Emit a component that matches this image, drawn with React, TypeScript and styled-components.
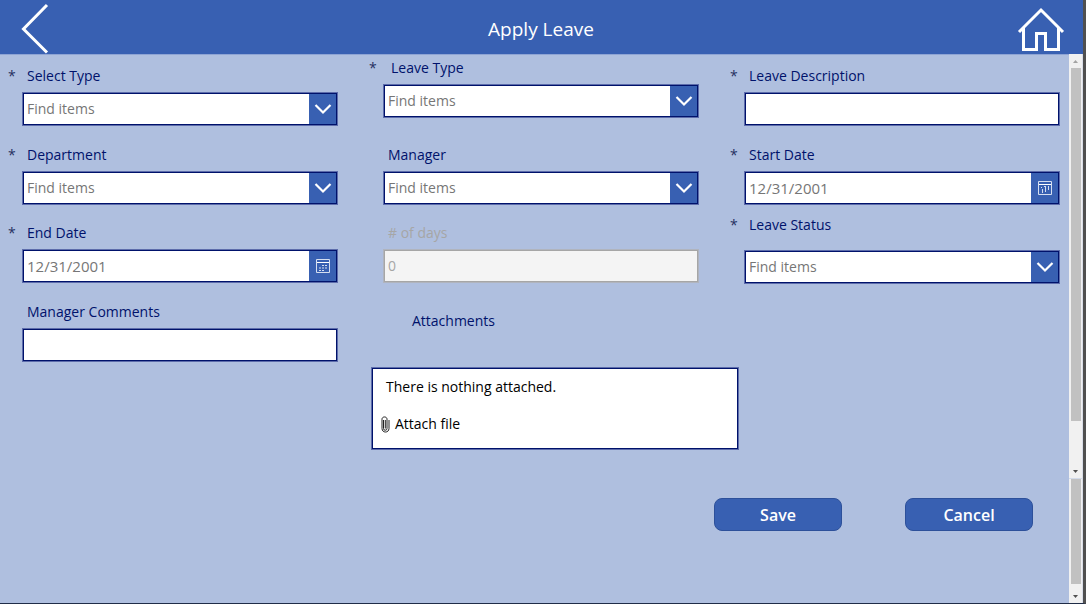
import React from "react";
import styled, { createGlobalStyle, css } from "styled-components";

const navy = "#00126b";
const blue = "#3860b2";
const sky = "#afbfdf";

const GlobalStyle = createGlobalStyle`
  *, *::before, *::after { box-sizing: border-box; }
  body {
    margin: 0;
    font-family: "Open Sans", "Noto Sans", sans-serif;
    font-size: 14px;
    line-height: 22px;
    color: ${navy};
  }
  button, input, select { font: inherit; }
`;

const Page = styled.div`
  min-height: 100vh;
  display: flex;
  flex-direction: column;
  background: ${sky};
  border-right: 3px solid #505050;
  border-bottom: 1px solid #1f2c47;
`;

const Header = styled.header`
  display: flex;
  align-items: center;
  justify-content: space-between;
  height: 54px;
  padding: 0 17px 0 10px;
  background: ${blue};
  box-shadow: 0 1px 0 #8ea4d4;
`;

const HeaderButton = styled.button`
  display: flex;
  align-items: center;
  justify-content: center;
  width: 50px;
  height: 54px;
  padding: 0;
  border: 0;
  background: transparent;
  color: #fff;
  cursor: pointer;
`;

const Title = styled.h1`
  flex: 1;
  margin: 0;
  padding: 4px 0 0 6px;
  text-align: center;
  font-size: 19px;
  line-height: 28px;
  font-weight: 400;
  color: #fff;
`;

const Body = styled.div`
  flex: 1;
  display: flex;
`;

const Form = styled.form`
  flex: 1;
  min-width: 0;
`;

const FieldGrid = styled.div`
  display: grid;
  grid-template-columns: repeat(3, minmax(0, 1fr));
  grid-template-rows: 79px 78px;
  grid-auto-rows: minmax(79px, auto);
  column-gap: 24px;
  padding-right: 10px;
`;

const FieldCell = styled.div<{ $raised?: boolean; $loose?: boolean }>`
  display: flex;
  flex-direction: column;
  gap: ${(p) => (p.$loose ? 14 : 5)}px;
  padding: ${(p) => (p.$raised || p.$loose ? 3 : 11)}px 0 0 22px;
`;

const LabelRow = styled.div`
  display: flex;
  margin-left: -22px;
`;

const Mark = styled.span<{ $wide?: boolean }>`
  width: ${(p) => (p.$wide ? 30 : 27)}px;
  padding-left: 8px;
  color: #26315f;
`;

const Label = styled.label<{ $muted?: boolean }>`
  color: ${(p) => (p.$muted ? "#a6a6a6" : navy)};
`;

const Control = styled.div<{ $muted?: boolean }>`
  position: relative;
  display: flex;
  height: 32px;
  margin: 1px 0 1px 1px;
  border: 1px solid ${(p) => (p.$muted ? "#a6a6a6" : navy)};
  box-shadow: 0 0 0 1px ${(p) => (p.$muted ? "#b0b4be" : "#5d6cab")};
  background: ${(p) => (p.$muted ? "#f4f4f4" : "#fff")};
`;

const inputBase = css`
  flex: 1;
  min-width: 0;
  width: 100%;
  padding: 0 3px;
  border: 0;
  border-radius: 0;
  background: transparent;
  color: #767676;
`;

const TextInput = styled.input`
  ${inputBase}
  font-size: 15px;
  &:disabled { color: #a6a6a6; font-size: 14px; }
`;

const Select = styled.select`
  ${inputBase}
  appearance: none;
  padding: 0 32px 1px 3px;
`;

const Chevron = styled.span`
  position: absolute;
  top: 0;
  right: 0;
  bottom: 0;
  width: 27px;
  display: flex;
  align-items: center;
  justify-content: center;
  background: ${blue};
  color: #fff;
  pointer-events: none;
`;

const DateButton = styled.button`
  display: flex;
  align-items: center;
  justify-content: center;
  width: 27px;
  padding: 0;
  border: 0;
  background: ${blue};
  cursor: pointer;
`;

const AttachmentCell = styled.section`
  grid-column: 2 / span 2;
  padding: 20px 0 0 11px;
`;

const AttachmentTitle = styled.h2`
  margin: 0 0 36px;
  padding-left: 40px;
  font-size: 14px;
  line-height: 22px;
  font-weight: 400;
`;

const AttachmentBox = styled.div`
  width: 53.3%;
  min-height: 81px;
  margin-bottom: 1px;
  padding: 7px 8px;
  border: 1px solid ${navy};
  box-shadow: 0 0 0 1px #5d6cab;
  background: #fff;
  color: #000;
`;

const AttachmentEmpty = styled.p`
  margin: 0 0 15px;
  padding-left: 5px;
`;

const AttachButton = styled.button`
  display: flex;
  align-items: center;
  gap: 5px;
  padding: 0;
  border: 0;
  background: transparent;
  color: #000;
  cursor: pointer;
`;

const Actions = styled.div`
  display: flex;
  justify-content: flex-end;
  gap: 63px;
  padding: 48px 36px 24px;
`;

const ActionButton = styled.button`
  width: 128px;
  height: 33px;
  padding: 0;
  border: 1px solid #2d509a;
  border-radius: 8px;
  background: ${blue};
  color: #fff;
  font-size: 16px;
  font-weight: 600;
  cursor: pointer;
`;

const Rails = styled.div`
  display: flex;
  flex-direction: column;
  width: 14px;
  background: #f1f1f1;
  border-right: 1px solid #d9dde8;
`;

const Rail = styled.div<{ $share: number; $divided?: boolean }>`
  flex: ${(p) => p.$share} 1 0;
  display: flex;
  flex-direction: column;
  align-items: center;
  border-top: ${(p) => (p.$divided ? "1px solid #d3dbea" : "0")};
`;

const Thumb = styled.div<{ $share: number }>`
  flex: ${(p) => p.$share} 1 0;
  width: 10px;
  background: #c1c1c1;
`;

const Track = styled.div<{ $share: number }>`
  flex: ${(p) => p.$share} 1 0;
`;

const Arrow = styled.svg`
  display: block;
  flex: none;
`;

const BackIcon = () => (
  <svg width="32" height="54" viewBox="0 0 32 54" fill="none" aria-hidden="true">
    <path d="M28 5 4.500 29 28 52.500" stroke="currentColor" strokeWidth="3" />
  </svg>
);

const HomeIcon = () => (
  <svg width="50" height="54" viewBox="0 0 50 54" fill="none" stroke="currentColor" strokeWidth="3" aria-hidden="true">
    <path d="M3 32 25 10 47 32" />
    <path d="M7.500 28v21.500h13v-16h9v16h13V28" />
  </svg>
);

const ChevronIcon = () => (
  <svg width="18" height="12" viewBox="0 0 18 12" fill="none" aria-hidden="true">
    <path d="m1.500 2 7.500 7.500L16.500 2" stroke="currentColor" strokeWidth="2.200" />
  </svg>
);

const CalendarIcon = ({ bars }: { bars?: boolean }) => (
  <svg width="14" height="14" viewBox="0 0 14 14" fill="none" stroke="#d5def0" aria-hidden="true">
    <path d="M.5.5h13v13H.5z" />
    <path d="M1 3.500h12" stroke="#fff" />
    {bars ? (
      <path d="M4.500 8v4M7.500 5v6M10.500 5v4M3 6.500h1M6 5.500h1" />
    ) : (
      <path d="M6 6.500h2M9 6.500h2M3 9h2M6 9h2M9 9h2M3 11.500h2M6 11.500h2" />
    )}
  </svg>
);

const ClipIcon = () => (
  <svg width="9" height="17" viewBox="0 0 9 17" fill="none" stroke="#222" aria-hidden="true">
    <path d="M2.500 4v8.500a1.700 1.700 0 0 0 3.500 0V3.200C6 .2 1 .2 1 3.200v9.300c0 4.700 7 4.700 7 0V4" />
    <path d="M4.300 4v8.500" />
  </svg>
);

const ScrollArrow = ({ up }: { up?: boolean }) => (
  <Arrow width="13" height="14" viewBox="0 0 13 14" aria-hidden="true">
    {up ? (
      <path d="M4 9h5L6.500 6z" fill="#a3a3a3" />
    ) : (
      <path d="M4 6h5L6.500 9z" fill="#505050" />
    )}
  </Arrow>
);

type FieldProps = {
  id: string;
  label: string;
  kind: "select" | "date" | "text";
  required?: boolean;
  raised?: boolean;
  loose?: boolean;
  disabled?: boolean;
  bars?: boolean;
  value?: string;
};

const Field = ({ id, label, kind, required, raised, loose, disabled, bars, value }: FieldProps) => (
  <FieldCell $raised={raised} $loose={loose}>
    <LabelRow>
      <Mark $wide={raised} aria-hidden="true">{required ? "*" : ""}</Mark>
      <Label htmlFor={id} $muted={disabled}>{label}</Label>
    </LabelRow>
    <Control $muted={disabled}>
      {kind === "select" ? (
        <>
          <Select id={id} required={required} defaultValue="">
            <option value="">Find items</option>
          </Select>
          <Chevron><ChevronIcon /></Chevron>
        </>
      ) : (
        <TextInput id={id} type="text" required={required} disabled={disabled} defaultValue={value} />
      )}
      {kind === "date" && (
        <DateButton type="button" aria-label={`Choose ${label}`}>
          <CalendarIcon bars={bars} />
        </DateButton>
      )}
    </Control>
  </FieldCell>
);

export default function App() {
  return (
    <>
      <GlobalStyle />
      <Page>
        <Header>
          <HeaderButton type="button" aria-label="Back"><BackIcon /></HeaderButton>
          <Title>Apply Leave</Title>
          <HeaderButton type="button" aria-label="Home"><HomeIcon /></HeaderButton>
        </Header>
        <Body>
          <Form onSubmit={(e) => e.preventDefault()}>
            <FieldGrid>
              <Field id="select-type" label="Select Type" kind="select" required />
              <Field id="leave-type" label="Leave Type" kind="select" required raised />
              <Field id="leave-description" label="Leave Description" kind="text" required />
              <Field id="department" label="Department" kind="select" required />
              <Field id="manager" label="Manager" kind="select" />
              <Field id="start-date" label="Start Date" kind="date" required bars value="12/31/2001" />
              <Field id="end-date" label="End Date" kind="date" required value="12/31/2001" />
              <Field id="days" label="# of days" kind="text" disabled value="0" />
              <Field id="leave-status" label="Leave Status" kind="select" required loose />
              <Field id="comments" label="Manager Comments" kind="text" />
              <AttachmentCell>
                <AttachmentTitle>Attachments</AttachmentTitle>
                <AttachmentBox>
                  <AttachmentEmpty>There is nothing attached.</AttachmentEmpty>
                  <AttachButton type="button"><ClipIcon />Attach file</AttachButton>
                </AttachmentBox>
              </AttachmentCell>
            </FieldGrid>
            <Actions>
              <ActionButton type="submit">Save</ActionButton>
              <ActionButton type="button">Cancel</ActionButton>
            </Actions>
          </Form>
          <Rails aria-hidden="true">
            <Rail $share={425}>
              <ScrollArrow up />
              <Thumb $share={353} />
              <Track $share={43} />
              <ScrollArrow />
            </Rail>
            <Rail $share={124} $divided>
              <Thumb $share={105} />
              <Track $share={5} />
              <ScrollArrow />
            </Rail>
          </Rails>
        </Body>
      </Page>
    </>
  );
}
